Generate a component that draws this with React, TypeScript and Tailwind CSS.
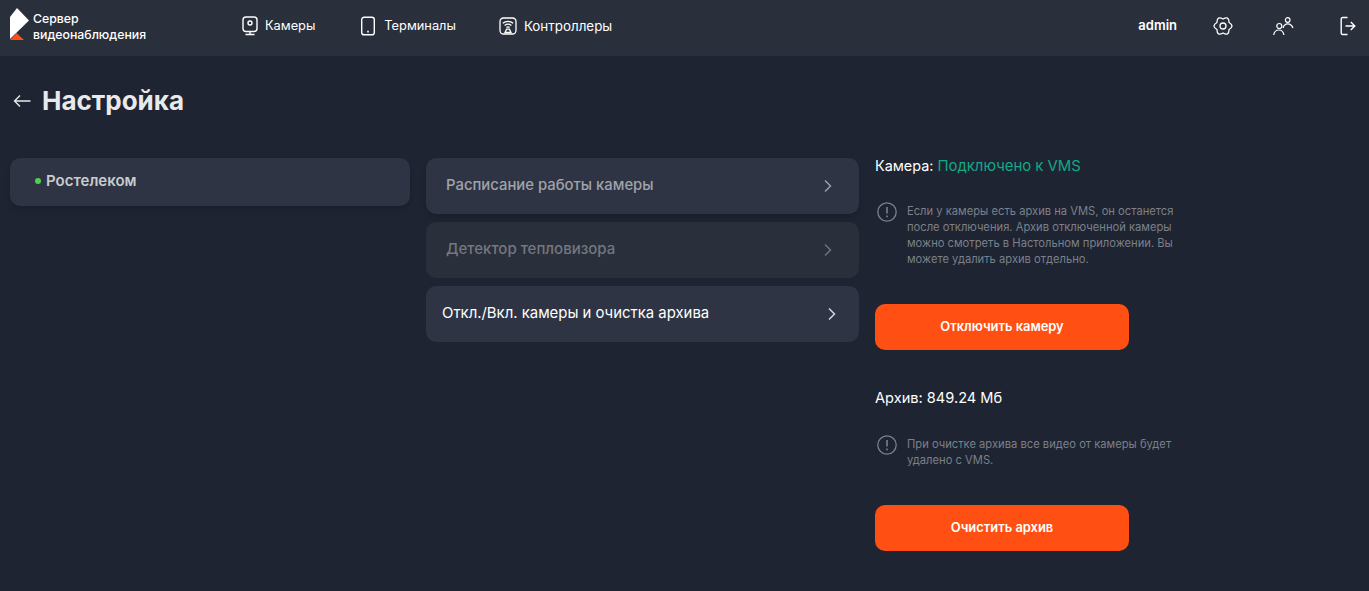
import { ReactNode } from "react";

const navItems = [
  {
    label: "Камеры",
    wrap: "mr-[45px] gap-[6px] text-[12.8px]",
    icon: (
      <svg width="18" height="20" viewBox="0 0 18 20" fill="none" stroke="currentColor" strokeWidth="1.4">
        <rect x="2" y="1" width="14" height="14.5" rx="3" />
        <circle cx="9" cy="7" r="2" />
        <path d="M9 15.5V18.5M4.5 18.5H13.5" />
      </svg>
    ),
  },
  {
    label: "Терминалы",
    wrap: "mr-[43px] gap-[8px] text-[12.8px]",
    icon: (
      <svg width="16" height="20" viewBox="0 0 16 20" fill="none" stroke="currentColor" strokeWidth="1.4">
        <rect x="1.7" y="1.2" width="12.6" height="17.6" rx="2.4" />
        <path d="M7.2 15.6H8.8" strokeWidth="1.8" />
      </svg>
    ),
  },
  {
    label: "Контроллеры",
    wrap: "gap-[7px] text-[13.4px]",
    icon: (
      <svg width="18" height="18" viewBox="0 0 18 18" fill="none" stroke="currentColor" strokeWidth="1.3">
        <rect x="1" y="1" width="16" height="16" rx="3.5" />
        <path d="M3.8 6.2C6.8 3.8 11.2 3.8 14.2 6.2" />
        <path d="M5.6 8.4C7.6 6.9 10.4 6.9 12.4 8.4" />
        <path d="M7.4 10.4C8.4 9.7 9.6 9.7 10.6 10.4" />
        <path d="M6 15.5L7.6 12.2H10.4L12 15.5Z" />
      </svg>
    ),
  },
];

function InfoNote({ children, className }: { children: ReactNode; className: string }) {
  return (
    <div className={`flex items-start gap-[10px] pl-[2px] ${className}`}>
      <svg className="mt-[-1px] shrink-0" width="20" height="20" viewBox="0 0 20 20" fill="none" stroke="#7b808a" strokeWidth="1.3">
        <circle cx="10" cy="10" r="9.2" />
        <path d="M10 5V11.6" strokeWidth="1.6" />
        <path d="M10 13.6V15.2" strokeWidth="1.6" />
      </svg>
      <p className="w-[280px] text-[11.2px] leading-[16px] text-[#7b808a]">{children}</p>
    </div>
  );
}

function Chevron({ color }: { color: string }) {
  return (
    <svg width="10" height="14" viewBox="0 0 10 14" fill="none" stroke={color} strokeWidth="1.5">
      <path d="M2 1.5L7.5 7L2 12.5" />
    </svg>
  );
}

export default function App() {
  return (
    <div
      className="h-[591px] overflow-hidden bg-[#1e2431] text-white"
      style={{ fontFamily: "Inter, 'Noto Sans', sans-serif" }}
    >
      <header className="flex h-[56px] items-center bg-[#2a2f3c] pb-[4px] pl-[10px] pr-[13px]">
        <div className="flex w-[231px] items-center gap-[4px]">
          <svg className="mb-[4px]" width="19" height="32" viewBox="0 0 19 32">
            <path d="M0 9L7 0L19 12.5L0 31Z" fill="#ffffff" />
            <path d="M0 32L6.5 25L14 32Z" fill="#ff4f12" />
          </svg>
          <div className="mt-[2px] text-[12.3px] leading-[16px] font-medium">
            Сервер
            <br />
            видеонаблюдения
          </div>
        </div>
        <nav className="flex items-center">
          {navItems.map((n) => (
            <div key={n.label} className={`flex items-center ${n.wrap}`}>
              {n.icon}
              <span>{n.label}</span>
            </div>
          ))}
        </nav>
        <div className="ml-auto flex items-center">
          <span className="mr-[36px] text-[13px] font-semibold">admin</span>
          <svg className="mr-[40px]" width="20" height="20" viewBox="0 0 20 20" fill="none" stroke="currentColor" strokeWidth="1.3">
            <path d="M10 3Q4 -0.4 3.94 6.5Q-2 10 3.94 13.5Q4 20.4 10 17Q16 20.4 16.06 13.5Q22 10 16.06 6.5Q16 -0.4 10 3Z" />
            <circle cx="10" cy="10" r="3" />
          </svg>
          <svg className="mr-[46px]" width="21" height="18" viewBox="0 0 21 18" fill="none" stroke="currentColor" strokeWidth="1.2">
            <circle cx="14.7" cy="3" r="2.3" />
            <path d="M10 11C10.8 8 12.4 6.8 14.7 6.8C17 6.8 19 8.2 20 11" />
            <circle cx="6.3" cy="9" r="2.5" />
            <path d="M0.7 18C1.2 15 3.2 13 5.8 13C8.4 13 10.4 15 10.9 18" />
          </svg>
          <svg width="16" height="20" viewBox="0 0 16 20" fill="none" stroke="currentColor" strokeWidth="1.4">
            <path d="M7.5 1.5H2.8C1.8 1.5 1.2 2.1 1.2 3.1V16.9C1.2 17.9 1.8 18.5 2.8 18.5H7.5" />
            <path d="M5.5 10H14.5M10.8 6L14.8 10L10.8 14" />
          </svg>
        </div>
      </header>

      <div className="flex h-[102px] items-start pl-[13px] pt-[27px]">
        <div className="flex items-center gap-[11px]">
          <svg width="18" height="14" viewBox="0 0 18 14" fill="none" stroke="#e8e9ec" strokeWidth="1.4">
            <path d="M17.5 7H1.5M7 1.5L1.5 7L7 12.5" />
          </svg>
          <h1 className="text-[26px] leading-[36px] font-bold text-[#e8e9ec]">Настройка</h1>
        </div>
      </div>

      <main className="flex items-start gap-4 pl-[10px]">
        <div className="flex h-[48px] w-[400px] items-start rounded-[10px] bg-[#2e3444] pl-[25px] pt-[14px] shadow-md">
          <div className="flex items-center gap-[5px] text-[15px] leading-[18px] font-semibold text-[#c9cbd0]">
            <span className="h-[6px] w-[6px] rounded-full bg-[#4fd04f]" />
            Ростелеком
          </div>
        </div>

        <div className="flex w-[433px] flex-col gap-2">
          <div className="flex h-[56px] items-center justify-between rounded-[10px] bg-[#2e3444] pl-[20px] pr-[26px] shadow-md">
            <span className="pb-[2px] text-[14.85px] font-medium text-[#a0a3aa]">Расписание работы камеры</span>
            <Chevron color="#9a9da4" />
          </div>
          <div className="flex h-[56px] items-center justify-between rounded-[10px] bg-[#2a2f3c] pl-[20px] pr-[26px]">
            <span className="pb-[2px] text-[15px] font-medium text-[#74777f]">Детектор тепловизора</span>
            <Chevron color="#6f727a" />
          </div>
          <div className="flex h-[56px] items-center justify-between rounded-[10px] bg-[#2e3444] pl-[16px] pr-[22px]">
            <span className="pb-[2px] text-[14.9px] font-normal text-white">Откл./Вкл. камеры и очистка архива</span>
            <Chevron color="#d5d6da" />
          </div>
        </div>

        <div className="w-[330px]">
          <div className="text-[14.4px] leading-[16px]">
            Камера: <span className="text-[14.9px] text-[#13a888]">Подключено к VMS</span>
          </div>
          <InfoNote className="mt-[29px]">
            Если у камеры есть архив на VMS, он останется после отключения. Архив отключенной камеры можно смотреть в
            Настольном приложении. Вы можете удалить архив отдельно.
          </InfoNote>
          <button className="mt-[37px] block h-[46px] w-[254px] rounded-[10px] bg-[#ff4f12] text-[12.9px] font-semibold">
            Отключить камеру
          </button>
          <div className="mt-[40px] text-[14.6px] leading-[16px]">Архив: 849.24 Мб</div>
          <InfoNote className="mt-[30px]">
            При очистке архива все видео от камеры будет удалено с VMS.
          </InfoNote>
          <button className="mt-[37px] block h-[46px] w-[254px] rounded-[10px] bg-[#ff4f12] text-[12.9px] font-semibold">
            Очистить архив
          </button>
        </div>
      </main>
    </div>
  );
}
